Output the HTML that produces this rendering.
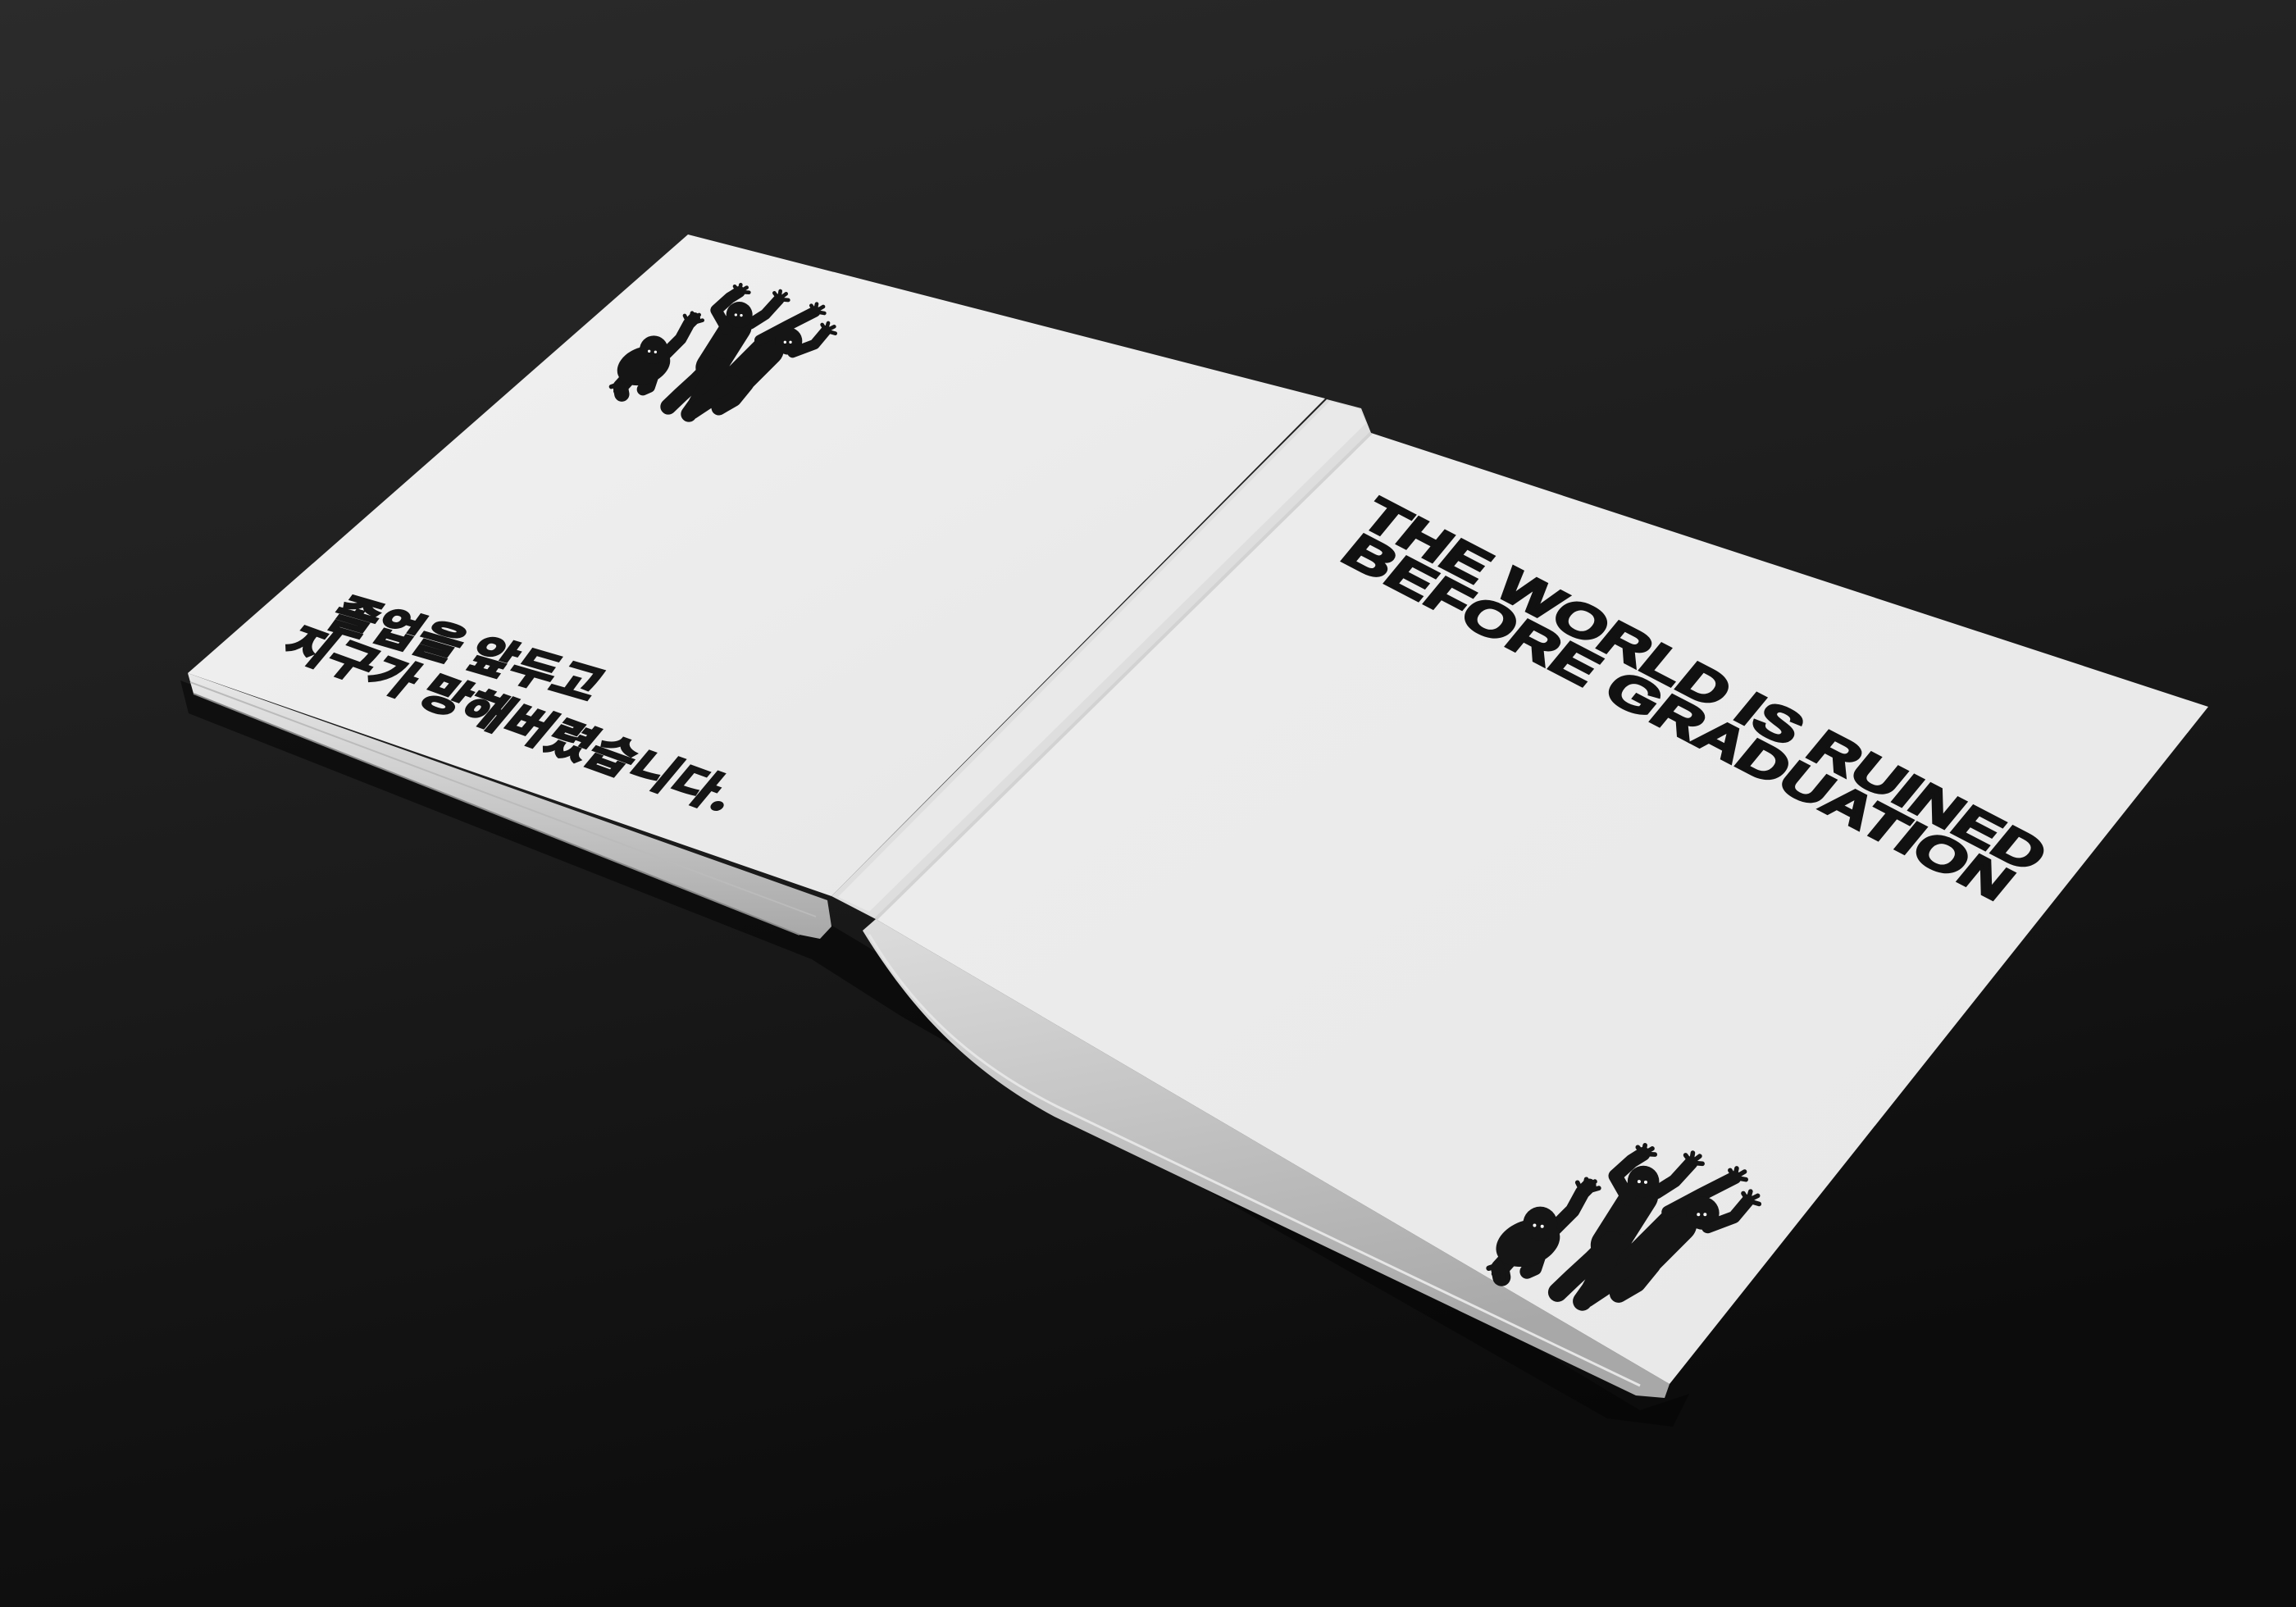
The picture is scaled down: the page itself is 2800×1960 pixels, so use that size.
<!DOCTYPE html>
<html><head><meta charset="utf-8"><style>
html,body{margin:0;padding:0;width:2800px;height:1960px;overflow:hidden;background:#1a1a1a}
svg{display:block}
</style></head><body>
<svg width="2800" height="1960" viewBox="0 0 2800 1960" xmlns="http://www.w3.org/2000/svg">
<defs>
<linearGradient id="bg" x1="0" y1="0" x2="0.3" y2="1">
<stop offset="0" stop-color="#2b2b2b"/><stop offset="0.55" stop-color="#1b1b1b"/><stop offset="1" stop-color="#0c0c0c"/>
</linearGradient>
<linearGradient id="lc" x1="0" y1="0" x2="1" y2="1">
<stop offset="0" stop-color="#f2f2f2"/><stop offset="1" stop-color="#e6e6e6"/>
</linearGradient>
<linearGradient id="rc" x1="0" y1="0" x2="1" y2="1">
<stop offset="0" stop-color="#ededed"/><stop offset="1" stop-color="#e8e8e8"/>
</linearGradient>
<linearGradient id="pg" x1="0" y1="0" x2="0" y2="1">
<stop offset="0" stop-color="#e8e8e8"/><stop offset="1" stop-color="#a8a8a8"/>
</linearGradient>
<linearGradient id="pg2" x1="0" y1="0" x2="0.3" y2="1">
<stop offset="0" stop-color="#dcdcdc"/><stop offset="1" stop-color="#a8a8a8"/>
</linearGradient>
<symbol id="z" viewBox="0 0 960 600">
<g fill="none" stroke="#151515" stroke-linecap="round" stroke-linejoin="round">
<path d="M270,340 L330,280 L360,225 L380,205" stroke-width="44"/>
<path d="M360,225 L345,195 M365,220 L372,185 M372,215 L398,192 M375,222 L410,212" stroke-width="14"/>
<path d="M160,400 L110,455 L115,482" stroke-width="55"/>
<path d="M230,410 L215,455 L192,465" stroke-width="44"/>
<path d="M110,440 L92,472 M115,450 L120,490 M105,445 L76,455" stroke-width="16"/>
<path d="M535,235 L440,385" stroke-width="110"/>
<path d="M500,245 L460,175 L510,130 L545,108" stroke-width="42"/>
<path d="M545,108 L528,88 M545,108 L550,82 M545,108 L572,92 M545,108 L580,110" stroke-width="14"/>
<path d="M585,225 L640,190 L690,135" stroke-width="40"/>
<path d="M690,135 L673,112 M690,135 L695,105 M690,135 L716,115 M690,135 L724,138" stroke-width="14"/>
<path d="M450,370 L390,430 L330,485 L285,528" stroke-width="58"/>
<path d="M480,380 L420,455 L385,520 L360,555" stroke-width="58"/>
<path d="M650,320 L520,450" stroke-width="115"/>
<path d="M620,285 L720,232 L822,180" stroke-width="40"/>
<path d="M822,180 L808,158 M822,180 L828,152 M822,180 L852,162 M822,180 L856,186" stroke-width="14"/>
<path d="M740,330 L820,300 L862,250" stroke-width="38"/>
<path d="M862,250 L848,228 M862,250 L870,222 M862,250 L892,235 M862,250 L896,260" stroke-width="14"/>
<path d="M520,440 L440,500 L372,545" stroke-width="58"/>
<path d="M570,445 L525,500 L470,532" stroke-width="55"/>
</g>
<g fill="#151515">
<ellipse cx="195" cy="378" rx="100" ry="68" transform="rotate(-20 195 378)"/>
<circle cx="232" cy="320" r="52"/>
<circle cx="545" cy="192" r="48"/>
<circle cx="725" cy="288" r="50"/>
</g>
<g fill="#fff"><circle cx="215" cy="325" r="5"/><circle cx="238" cy="328" r="5"/><circle cx="532" cy="192" r="5"/><circle cx="552" cy="194" r="5"/><circle cx="712" cy="292" r="5"/><circle cx="732" cy="292" r="5"/></g>
</symbol>
</defs>
<rect width="2800" height="1960" fill="url(#bg)"/>
<path d="M220,830 L1000,1120 L1100,1180 L2000,1720 L2060,1700 L2040,1740 L1960,1730 L1100,1240 L990,1170 L230,870 Z" fill="#050505" opacity="0.6"/>
<path d="M229,821 L1009,1098 L1014,1130 L1000,1145 L975,1140 L236,846 Z" fill="url(#pg)"/>
<path d="M236,846 L975,1140" stroke="#888" stroke-width="2"/>
<path d="M232,832 L995,1118" stroke="#bbb" stroke-width="2"/>
<path d="M1068,1121 L2036,1688 L2030,1705 L1995,1702 L1286,1362 C1180,1305 1110,1230 1052,1135 Z" fill="url(#pg2)"/>
<path d="M1060,1140 C1110,1225 1180,1295 1290,1350 L2000,1690" stroke="#e6e6e6" stroke-width="3" fill="none"/>
<polygon points="839,286 1616,486 1014,1093 229,821" fill="url(#lc)"/>
<polygon points="1672,528 2693,862 2036,1688 1068,1121" fill="url(#rc)"/>
<polygon points="1618,487 1660,498 1672,528 1068,1121 1014,1093" fill="#dedede"/>
<polygon points="1622,489 1658,499 1666,516 1060,1112 1022,1094" fill="#e9e9e9"/>
<path d="M1672,528 L1068,1121" stroke="#d2d2d2" stroke-width="4"/>
<use href="#z" x="720" y="320" width="320" height="200" preserveAspectRatio="none"/>
<use href="#z" x="1785" y="1302" width="386" height="365" preserveAspectRatio="none"/>
<g font-family="'Noto Sans CJK KR','NanumGothic',sans-serif" font-weight="900" fill="#151515" font-size="54" stroke="#151515" stroke-width="1.5">
<text transform="translate(396,762) rotate(16.2) skewX(-20)" textLength="335" lengthAdjust="spacingAndGlyphs">졸업을 앞두고</text>
<text transform="translate(340,795) rotate(19.9) skewX(-20)" textLength="575" lengthAdjust="spacingAndGlyphs">지구가 망해버렸습니다.</text>
</g>
<g font-family="'Liberation Sans',sans-serif" font-weight="bold" fill="#111" font-size="60" stroke="#111" stroke-width="3">
<text transform="translate(1655,638) rotate(27.5) skewX(-12)" textLength="925" lengthAdjust="spacingAndGlyphs">THE WORLD IS RUINED</text>
<text transform="translate(1632,682) rotate(27.5) skewX(-12)" textLength="905" lengthAdjust="spacingAndGlyphs">BEFORE GRADUATION</text>
</g>
</svg>
</body></html>
